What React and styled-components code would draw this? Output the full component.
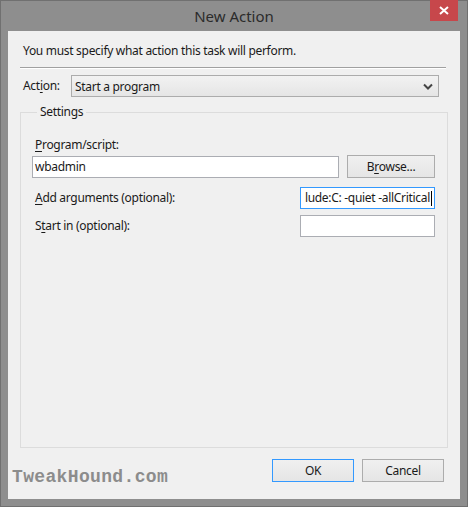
import React from "react";
import styled, { createGlobalStyle } from "styled-components";

const Global = createGlobalStyle`
  html, body { margin: 0; padding: 0; background: #8e8e8e; }
  body { font-family: "Noto Sans", "Open Sans", sans-serif; }
  * { box-sizing: border-box; }
`;

const Window = styled.div`
  position: relative;
  width: 468px;
  height: 507px;
  background: #8e8e8e;
  border: 1px solid #707070;
  display: flex;
  flex-direction: column;
`;

const TitleBar = styled.div`
  height: 30px;
  display: flex;
  align-items: center;
  justify-content: center;
  padding-bottom: 1px;
  font-size: 15px;
  color: #2b2b2b;
`;

const CloseButton = styled.div`
  position: absolute;
  top: -1px;
  right: 9px;
  width: 28px;
  height: 21px;
  background: #c7474b;
  display: flex;
  align-items: center;
  justify-content: center;
`;

const Client = styled.div`
  flex: 1;
  margin: 0 7px 7px;
  background: #f0f0f0;
  display: flex;
  flex-direction: column;
  font-size: 12px;
  letter-spacing: -0.3px;
  color: #1a1a1a;
`;

const Intro = styled.div`
  margin: 12px 0 0 15px;
  line-height: 16px;
`;

const Separator = styled.div`
  margin: 8px 0 0 12px;
  width: 426px;
  border-top: 1px solid #a0a0a0;
  border-bottom: 1px solid #ffffff;
`;

const ActionRow = styled.div`
  margin: 6px 0 0 15px;
  display: flex;
  align-items: center;
  height: 22px;
`;

const ActionLabel = styled.span`
  width: 48px;
  line-height: 16px;
`;

const Combo = styled.div`
  width: 368px;
  height: 22px;
  border: 1px solid #acacac;
  background: linear-gradient(#f2f2f2, #e5e5e5);
  display: flex;
  align-items: center;
  justify-content: space-between;
  padding: 0 5px 0 3px;
`;

const Group = styled.fieldset`
  margin: 7px 0 0 12px;
  padding: 0 12px 0 11px;
  width: 428px;
  height: 344px;
  border: 1px solid #dcdcdc;
  min-width: 0;
`;

const Legend = styled.legend`
  margin-left: 5px;
  padding: 0 3px;
  line-height: 16px;
`;

const FieldLabel = styled.div`
  margin: ${(p) => p.$top || 0}px 0 0 3px;
  line-height: 16px;
`;

const Row = styled.div`
  display: flex;
  align-items: center;
  justify-content: space-between;
  margin-top: ${(p) => p.$top || 0}px;
  height: ${(p) => p.$h || 22}px;
`;

const TextBox = styled.div`
  width: ${(p) => p.$w}px;
  height: 22px;
  background: #ffffff;
  border: 1px solid ${(p) => (p.$focus ? "#3399ff" : "#abadb3")};
  display: flex;
  align-items: center;
  justify-content: ${(p) => (p.$end ? "flex-end" : "flex-start")};
  padding: 0 2px;
  overflow: hidden;
  white-space: nowrap;
  line-height: 16px;
`;

const Caret = styled.span`
  display: inline-block;
  width: 1px;
  height: 15px;
  background: #000;
  margin-left: 1px;
`;

const Button = styled.div`
  width: ${(p) => p.$w || 82}px;
  height: 23px;
  border: 1px solid ${(p) => (p.$default ? "#3399ff" : "#acacac")};
  background: linear-gradient(#f0f0f0, #e5e5e5);
  display: flex;
  align-items: center;
  justify-content: center;
  line-height: 16px;
`;

const Footer = styled.div`
  margin-top: 11px;
  display: flex;
  align-items: flex-start;
  padding: 0 16px 0 4px;
`;

const Watermark = styled.div`
  font-family: "Liberation Mono", "DejaVu Sans Mono", monospace;
  font-weight: bold;
  font-size: 18px;
  letter-spacing: 0.35px;
  line-height: 18px;
  color: #8c8c8c;
  margin-top: 9px;
  flex: 1;
`;

const Buttons = styled.div`
  display: flex;
  gap: 8px;
`;

const U = styled.span`
  text-decoration: underline;
  text-underline-offset: 2px;
`;

export default function App() {
  return (
    <>
      <Global />
      <Window>
        <TitleBar>New Action</TitleBar>
        <CloseButton>
          <svg width="10" height="9" viewBox="0 0 10 9">
            <path d="M1 1 L9 8 M9 1 L1 8" stroke="#fff" strokeWidth="2" />
          </svg>
        </CloseButton>
        <Client>
          <Intro>You must specify what action this task will perform.</Intro>
          <Separator />
          <ActionRow>
            <ActionLabel>
              Act<U>i</U>on:
            </ActionLabel>
            <Combo>
              <span>Start a program</span>
              <svg width="10" height="7" viewBox="0 0 10 7">
                <path d="M1 1.5 L5 5.5 L9 1.5" stroke="#444" strokeWidth="2" fill="none" />
              </svg>
            </Combo>
          </ActionRow>
          <Group>
            <Legend>Settings</Legend>
            <FieldLabel $top={17}>
              <U>P</U>rogram/script:
            </FieldLabel>
            <Row $top={2} $h={23}>
              <TextBox $w={307}>wbadmin</TextBox>
              <Button $w={88}>
                B<U>r</U>owse...
              </Button>
            </Row>
            <Row $top={9}>
              <FieldLabel>
                <U>A</U>dd arguments (optional):
              </FieldLabel>
              <TextBox $w={135} $focus $end>
                lude:C: -quiet -allCritical
                <Caret />
              </TextBox>
            </Row>
            <Row $top={6}>
              <FieldLabel>
                S<U>t</U>art in (optional):
              </FieldLabel>
              <TextBox $w={135} />
            </Row>
          </Group>
          <Footer>
            <Watermark>TweakHound.com</Watermark>
            <Buttons>
              <Button $default>OK</Button>
              <Button>Cancel</Button>
            </Buttons>
          </Footer>
        </Client>
      </Window>
    </>
  );
}
